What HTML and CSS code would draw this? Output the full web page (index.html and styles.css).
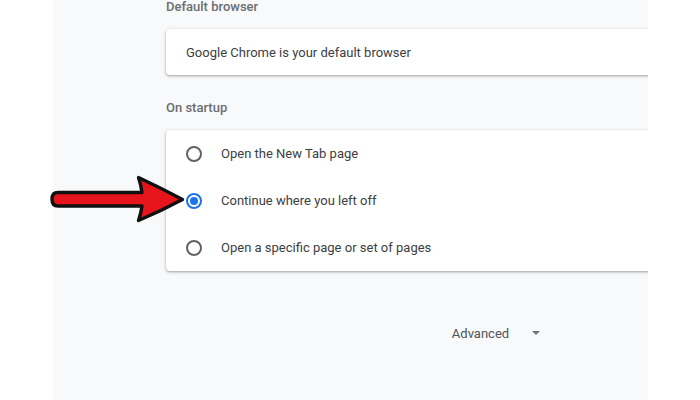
FILE: index.html
```html
<!DOCTYPE html>
<html>
<head>
<meta charset="utf-8">
<link rel="stylesheet" href="styles.css">
</head>
<body>
<div class="page">
  <div class="settings">
    <div class="column">
      <div class="section-title">Default browser</div>
      <div class="card default-card">
        <span class="primary">Google Chrome is your default browser</span>
      </div>
      <div class="section-title startup-title">On startup</div>
      <div class="card">
        <div class="row"><span class="radio"></span><span class="primary">Open the New Tab page</span></div>
        <div class="row"><span class="radio checked"></span><span class="primary">Continue where you left off</span></div>
        <div class="row"><span class="radio"></span><span class="primary">Open a specific page or set of pages</span></div>
      </div>
      <div class="advanced">
        <span class="advanced-label">Advanced</span>
        <span class="caret"></span>
      </div>
    </div>
  </div>
  <svg class="arrow" width="140" height="54" viewBox="48 172 140 54">
    <path d="M58,192.5 L142,192.5 Q141,185 138.5,177.5 Q161,188 182.5,199.5 Q161,211 138.5,220.5 Q141,213 142,206 L58,206 Q52,206 52,199.25 Q52,192.5 58,192.5 Z" fill="#e8141c" stroke="#111" stroke-width="3.4" stroke-linejoin="round"/>
  </svg>
</div>
</body>
</html>
```
FILE: styles.css
```css
html, body {
  margin: 0;
  padding: 0;
  background: #ffffff;
}
body {
  font-family: Roboto, "Liberation Sans", sans-serif;
}
.page {
  position: relative;
  width: 700px;
  height: 400px;
  overflow: hidden;
}
.settings {
  margin-left: 53px;
  width: 595px;
  height: 400px;
  background: #f8f9fa;
  overflow: hidden;
}
.column {
  margin-left: 113px;
  width: 660px;
}
.section-title {
  font-size: 13px;
  line-height: 16px;
  font-weight: 500;
  color: #6a6e72;
  margin-top: -1px;
  margin-bottom: 14px;
}
.startup-title {
  margin-top: 25px;
}
.card {
  background: #ffffff;
  border-radius: 4px;
  box-shadow: 0 1px 2px 0 rgba(60, 64, 67, 0.3), 0 1px 3px 1px rgba(60, 64, 67, 0.15);
}
.default-card {
  height: 46px;
  display: flex;
  align-items: center;
  padding-left: 20px;
}
.primary {
  font-size: 13px;
  color: #3c4043;
}
.row {
  height: 47px;
  display: flex;
  align-items: center;
  padding-left: 20px;
}
.radio {
  box-sizing: border-box;
  width: 16px;
  height: 16px;
  border: 2px solid #5f6368;
  border-radius: 50%;
  margin-right: 19px;
  display: flex;
  align-items: center;
  justify-content: center;
}
.radio.checked {
  border-color: #1a73e8;
}
.radio.checked::after {
  content: "";
  width: 8px;
  height: 8px;
  border-radius: 50%;
  background: #1a73e8;
}
.advanced {
  margin-top: 52px;
  display: flex;
  justify-content: center;
  align-items: center;
  height: 20px;
}
.advanced-label {
  font-size: 13px;
  color: #4f5357;
}
.caret {
  margin-left: 23px;
  width: 0;
  height: 0;
  border-left: 4px solid transparent;
  border-right: 4px solid transparent;
  border-top: 4px solid #6f7377;
}
.arrow {
  position: absolute;
  left: 48px;
  top: 172px;
}
```
